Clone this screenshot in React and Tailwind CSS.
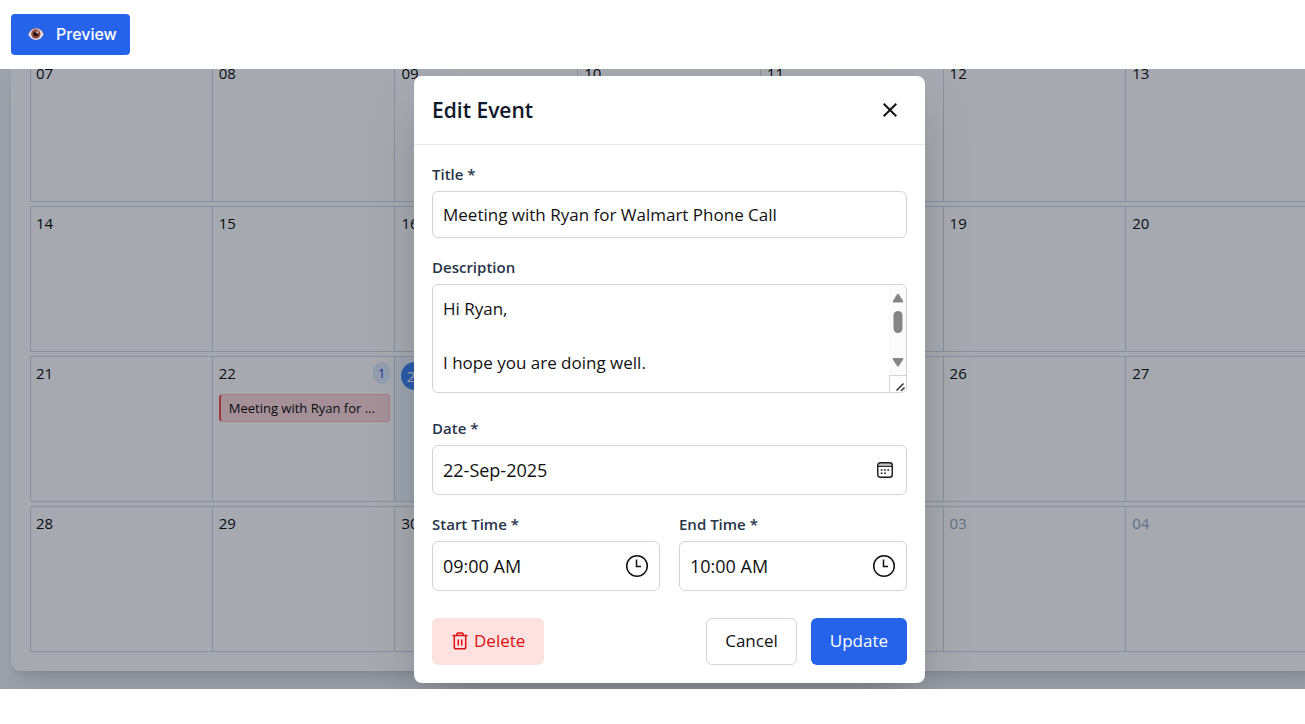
import React from "react";

const WEEKS = [
  ["07", "08", "09", "10", "11", "12", "13"],
  ["14", "15", "16", "17", "18", "19", "20"],
  ["21", "22", "23", "24", "25", "26", "27"],
  ["28", "29", "30", "01", "02", "03", "04"],
];

const MESSAGE = `Hi Ryan,

I hope you are doing well.

I would like to set up a call to talk about Walmart.

Thank you`;

const LABEL = "block text-[15px] leading-[22px] font-semibold text-[#27344a] mb-1.5";
const FIELD = "block w-full rounded-md border border-[#d1d5db] bg-white px-2.5 text-[#111111] outline-none";

function EyeIcon() {
  return (
    <svg width="16" height="16" viewBox="0 0 16 16" aria-hidden="true">
      <path d="M0.300 8.200C2.200 4.300 5 2.200 8.200 2.200s5.800 2 7.500 5.800c-1.700 3.900-4.500 5.900-7.700 5.900S2 12 0.300 8.200z" fill="#f0e2e2" />
      <path d="M0.300 8.200C2.200 4.300 5 2.200 8.200 2.200s5.800 2 7.500 5.800" fill="none" stroke="#8d6f8f" strokeWidth="0.800" />
      <circle cx="7.800" cy="8" r="4.700" fill="#94493f" />
      <circle cx="7.800" cy="8" r="2.500" fill="#2b1619" />
      <circle cx="9.200" cy="6.300" r="1.100" fill="#e9d7d7" />
    </svg>
  );
}

function ClockIcon() {
  return (
    <svg width="24" height="24" viewBox="0 0 24 24" fill="none" stroke="#111" strokeWidth="1.5" aria-hidden="true">
      <circle cx="12" cy="12" r="10.300" />
      <path d="M11.500 5.500v7H16" />
    </svg>
  );
}

function CalendarIcon() {
  return (
    <svg width="16" height="16" viewBox="0 0 16 16" fill="none" aria-hidden="true">
      <path d="M1 3.500h14v-1L13 1H3L1 2.500z" fill="#c4c4c4" />
      <rect x="0.750" y="0.750" width="14.500" height="14.500" rx="2.500" stroke="#1a1a1a" strokeWidth="1.400" />
      <path d="M1 4.300h14" stroke="#1a1a1a" strokeWidth="1.200" />
      <path d="M3.800 7.200h1.700v1.600H3.800zM7.100 7.200h1.700v1.600H7.100zM10.400 7.200h1.700v1.600h-1.700zM3.800 10.500h1.700v1.600H3.800zM7.100 10.500h1.700v1.600H7.100z" fill="#1a1a1a" />
    </svg>
  );
}

function TrashIcon() {
  return (
    <svg width="16" height="18" viewBox="0 0 16 18" fill="none" stroke="#dc1010" strokeWidth="1.500" strokeLinecap="round" strokeLinejoin="round" aria-hidden="true">
      <path d="M1 3.500h14" />
      <path d="M4.800 3.300V2.300c0-.8.5-1.300 1.300-1.300h3.800c.8 0 1.300.5 1.300 1.300v1" />
      <path d="M2.300 3.700v11.200c0 1.200.7 1.900 1.900 1.900h7.600c1.200 0 1.900-.7 1.900-1.900V3.700" />
      <path d="M6.300 8v5M9.700 8v5" />
    </svg>
  );
}

function ScrollBar() {
  return (
    <div className="pointer-events-none absolute inset-y-px right-px flex w-[17px] flex-col overflow-hidden rounded-r-md" aria-hidden="true">
      <div className="flex flex-1 flex-col items-center bg-[#fbfbfb] pt-2">
        <svg width="12" height="76" viewBox="0 0 12 76" fill="#858585">
          <path d="M5.200 1.300q.8-1 1.600 0l4.400 6.600q.5 1.300-.9 1.500H1.700Q.3 9.200.8 7.900z" />
          <rect x="1.500" y="18" width="9" height="22" rx="4.500" />
          <path d="M5.200 73q.8 1 1.600 0l4.400-6.600q.5-1.300-.9-1.500H1.700q-1.400.2-.9 1.500z" />
        </svg>
      </div>
      <div className="h-[17px] border-t border-l border-[#d1d5db] bg-white">
        <svg width="16" height="16" viewBox="0 0 16 16" stroke="#333" strokeWidth="1.500">
          <path d="M6.500 14.500l7-7M11 15l3.500-3.500" />
        </svg>
      </div>
    </div>
  );
}

function DayCell({ day, week, column }) {
  const isToday = week === 2 && day === "23";
  const hasEvent = week === 2 && day === "22";
  const isNextMonth = week === 3 && column > 2;
  return (
    <div
      className={
        "h-[146px] border-y border-r border-[#cfd4e0] px-1.5 py-[5px] first:border-l first:pl-[5px] " +
        (isToday ? "bg-[#eff6ff]" : "bg-white")
      }
    >
      <div className="flex items-start justify-between">
        {isToday ? (
          <span className="flex size-7 items-center justify-center rounded-full bg-[#3b82f6] text-[15px] text-white">{day}</span>
        ) : (
          <span className={"text-[15px] leading-[22px] " + (isNextMonth ? "text-[#94a3b8]" : "text-black")}>{day}</span>
        )}
        {hasEvent && (
          <span className="-mr-0.5 rounded-full bg-[#e0ecfe] px-[5px] text-[13px] leading-[22px] text-[#1d30d8]">1</span>
        )}
      </div>
      {hasEvent && (
        <div className="mt-2.5 -mr-0.5 overflow-hidden rounded border border-l-2 border-[#fbb9b9] border-l-[#ef4444] bg-[#fdd5d8] pl-2 text-[13px] leading-[26px] whitespace-nowrap text-black">
          Meeting with Ryan for ...
        </div>
      )}
    </div>
  );
}

function EditEventDialog() {
  return (
    <div role="dialog" aria-labelledby="dialog-title" className="w-full max-w-[511px] rounded-lg bg-white shadow-2xl">
      <header className="flex h-[69px] items-center justify-between border-b border-[#e5e7eb] pr-6 pl-[18px]">
        <h2 id="dialog-title" className="text-[21px] leading-7 font-semibold text-[#0f172a]">Edit Event</h2>
        <button type="button" aria-label="Close" className="flex size-[22px] items-center justify-center">
          <svg width="14" height="14" viewBox="0 0 14 14" stroke="#111" strokeWidth="2" aria-hidden="true">
            <path d="M0.700 0.700l12.600 12.600M13.300 0.700L0.700 13.300" />
          </svg>
        </button>
      </header>
      <form className="flex flex-col gap-[18px] p-[18px]" onSubmit={(e) => e.preventDefault()}>
        <div>
          <label htmlFor="title" className={LABEL}>Title *</label>
          <input id="title" type="text" defaultValue="Meeting with Ryan for Walmart Phone Call" className={FIELD + " h-[47px] text-[17px]"} />
        </div>
        <div className="pb-1.5">
          <label htmlFor="description" className={LABEL}>Description</label>
          <div className="relative">
            <textarea id="description" defaultValue={MESSAGE} className={FIELD + " h-[109px] resize-none overflow-hidden py-2.5 text-[17px] leading-[27px]"} />
            <ScrollBar />
          </div>
        </div>
        <div>
          <label htmlFor="date" className={LABEL}>Date *</label>
          <div className="relative">
            <input id="date" type="text" defaultValue="22-Sep-2025" className={FIELD + " h-[50px] text-[18px]"} />
            <button type="button" aria-label="Choose date" className="absolute inset-y-0 right-3.5 flex items-center">
              <CalendarIcon />
            </button>
          </div>
        </div>
        <div className="grid grid-cols-2 gap-[19px]">
          <div>
            <label htmlFor="start" className={LABEL}>Start Time *</label>
            <div className="relative">
              <input id="start" type="text" defaultValue="09:00 AM" className={FIELD + " h-[50px] text-[18px]"} />
              <button type="button" aria-label="Choose start time" className="absolute inset-y-0 right-[11px] flex items-center">
                <ClockIcon />
              </button>
            </div>
          </div>
          <div>
            <label htmlFor="end" className={LABEL}>End Time *</label>
            <div className="relative">
              <input id="end" type="text" defaultValue="10:00 AM" className={FIELD + " h-[50px] text-[18px]"} />
              <button type="button" aria-label="Choose end time" className="absolute inset-y-0 right-[11px] flex items-center">
                <ClockIcon />
              </button>
            </div>
          </div>
        </div>
        <div className="flex items-center justify-between pt-[9px] text-[17px]">
          <button type="button" className="flex h-[47px] items-center gap-1.5 rounded-md bg-[#fee2e2] pr-[19px] pl-5 text-[#dc1010]">
            <TrashIcon />
            Delete
          </button>
          <div className="flex gap-3.5">
            <button type="button" className="h-[47px] rounded-md border border-[#d1d5db] bg-white px-[18px] text-[#111111]">Cancel</button>
            <button type="submit" className="h-[47px] rounded-md bg-[#2563eb] px-[19px] text-white">Update</button>
          </div>
        </div>
      </form>
    </div>
  );
}

export default function App() {
  return (
    <div className="min-h-screen bg-white font-['Open_Sans',sans-serif]">
      <div className="px-[11px] py-3.5">
        <button type="button" className="flex h-[41px] items-center gap-3 rounded bg-[#2563eb] pr-[13px] pb-0.5 pl-[17px] font-[family-name:Inter,sans-serif] text-base font-medium text-white">
          <EyeIcon />
          Preview
        </button>
      </div>
      <main className="relative overflow-hidden bg-[#f0f3f7] pb-[18px] pl-[11px]">
        <div className="-mt-[13px] -mr-[23px] flex flex-col gap-1 rounded-b-[10px] bg-white px-[19px] pb-[19px] shadow-xl">
          {WEEKS.map((days, week) => (
            <div key={week} className="grid grid-cols-7">
              {days.map((day, column) => (
                <DayCell key={day} day={day} week={week} column={column} />
              ))}
            </div>
          ))}
        </div>
        <div className="absolute inset-0 flex items-center justify-center bg-[#142030]/38 pl-[34px]">
          <EditEventDialog />
        </div>
      </main>
    </div>
  );
}
